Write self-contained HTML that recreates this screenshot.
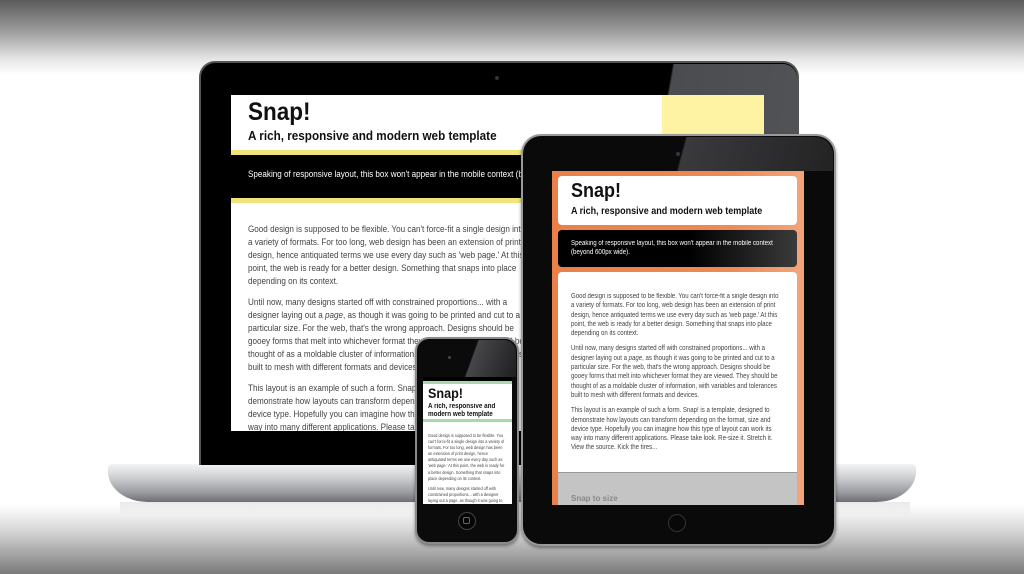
<!DOCTYPE html>
<html><head><meta charset="utf-8"><style>
*{margin:0;padding:0;box-sizing:border-box}
body{width:1024px;height:574px;overflow:hidden;position:relative;font-family:"Liberation Sans",Arial,sans-serif;background:#fff}
.a{position:absolute}
.bg{left:0;top:0;width:1024px;height:574px;background:linear-gradient(#5b5b5b 0px,#9a9a9a 30px,#e8e8e8 60px,#fff 75px,#fff 505px,#d8d8d8 530px,#7a7a7a 574px)}
.t{white-space:nowrap;color:#444;transform-origin:0 0}
.t p{margin:0}
.sx{transform:scaleX(.9);transform-origin:0 0;white-space:nowrap}
</style></head><body>
<div class="a bg"></div>
<!-- laptop base -->
<div class="a" style="left:108px;top:464px;width:808px;height:38px;border-radius:4px 4px 40px 40px/4px 4px 30px 30px;background:linear-gradient(#f4f4f6,#c9cacd 40%,#9a9ba0 75%,#6e6f73)"></div>
<div class="a" style="left:120px;top:502px;width:790px;height:14px;background:linear-gradient(rgba(200,200,205,.4),rgba(255,255,255,0))"></div>
<!-- laptop lid -->
<div class="a" style="left:199px;top:61px;width:600px;height:404px;border-radius:16px 16px 0 0;background:#000;border:2px solid #555;border-bottom:none"></div>
<div class="a" style="left:660px;top:64px;width:137px;height:400px;background:linear-gradient(100deg,rgba(0,0,0,0) 0,rgba(0,0,0,0) 6%,#4b4c50 7%,#545559 100%);border-radius:0 14px 0 0"></div>
<div class="a" style="left:495px;top:76px;width:4px;height:4px;border-radius:2px;background:#333"></div>
<!-- laptop screen -->
<div class="a" style="left:231px;top:95px;width:533px;height:336px;background:#fff;overflow:hidden">
 <div class="a" style="left:431px;top:0;width:102px;height:55px;background:#fdf3a3"></div>
 <div class="a sx" style="left:17px;top:3px;font-size:25px;font-weight:bold;color:#111">Snap!</div>
 <div class="a sx" style="left:17px;top:33px;font-size:13px;font-weight:bold;color:#111">A rich, responsive and modern web template</div>
 <div class="a" style="left:0;top:55px;width:533px;height:5px;background:#f0e47a"></div>
 <div class="a" style="left:0;top:60px;width:533px;height:43px;background:#000"></div>
 <div class="a t" style="left:17px;top:74px;font-size:9px;color:#fff;transform:scaleX(.9)">Speaking of responsive layout, this box won't appear in the mobile context (beyond 600px wide).</div>
 <div class="a" style="left:0;top:103px;width:533px;height:5px;background:#f0e47a"></div>
 <div class="a t" style="left:17px;top:128px;font-size:9px;line-height:13px;transform:scaleX(.9)">
 <p>Good design is supposed to be flexible. You can't force-fit a single design into<br>a variety of formats. For too long, web design has been an extension of print<br>design, hence antiquated terms we use every day such as 'web page.' At this<br>point, the web is ready for a better design. Something that snaps into place<br>depending on its context.</p>
 <p style="margin-top:8px">Until now, many designs started off with constrained proportions... with a<br>designer laying out a <i>page</i>, as though it was going to be printed and cut to a<br>particular size. For the web, that's the wrong approach. Designs should be<br>gooey forms that melt into whichever format they are viewed. They should be<br>thought of as a moldable cluster of information, with variables and tolerances<br>built to mesh with different formats and devices.</p>
 <p style="margin-top:8px">This layout is an example of such a form. Snap! is a template, designed to<br>demonstrate how layouts can transform depending on the format, size and<br>device type. Hopefully you can imagine how this type of layout can work its<br>way into many different applications. Please take look. Re-size it. Stretch it.<br>View the source. Kick the tires...</p>
 </div>
</div>
<!-- tablet -->
<div class="a" style="left:521px;top:134px;width:315px;height:412px;border-radius:20px;background:#0a0a0a;border:2px solid #9a9a9a;box-shadow:0 2px 3px rgba(0,0,0,.4)"></div>
<div class="a" style="left:660px;top:137px;width:173px;height:34px;border-radius:0 18px 0 0;background:linear-gradient(105deg,rgba(0,0,0,0) 14%,rgba(90,90,95,.6) 15%,rgba(60,60,62,.5))"></div>
<div class="a" style="left:676px;top:152px;width:4px;height:4px;border-radius:2px;background:#334"></div>
<div class="a" style="left:668px;top:514px;width:18px;height:18px;border-radius:9px;border:1px solid #333;background:#080808"></div>
<div class="a" style="left:552px;top:171px;width:252px;height:334px;background:linear-gradient(90deg,#e9804a,#ee8a55 70%,#f2a57a);overflow:hidden">
 <div class="a" style="left:6px;top:5px;width:239px;height:49px;background:#fff;border-radius:4px"></div>
 <div class="a sx" style="left:19px;top:9px;font-size:20px;font-weight:bold;color:#111">Snap!</div>
 <div class="a sx" style="left:19px;top:35px;font-size:10px;font-weight:bold;color:#111">A rich, responsive and modern web template</div>
 <div class="a" style="left:6px;top:59px;width:239px;height:37px;background:linear-gradient(90deg,#000 55%,#3a3a3a);border-radius:4px"></div>
 <div class="a t" style="left:19px;top:68px;font-size:7px;line-height:9px;color:#fff;transform:scaleX(.88)">Speaking of responsive layout, this box won't appear in the mobile context<br>(beyond 600px wide).</div>
 <div class="a" style="left:6px;top:101px;width:239px;height:200px;background:#fff;border-radius:4px 4px 0 0"></div>
 <div class="a" style="left:6px;top:301px;width:239px;height:40px;background:#c4c4c4;border-top:1px solid #999"></div>
 <div class="a" style="left:19px;top:323px;font-size:8px;font-weight:bold;color:#888">Snap to size</div>
 <div class="a t" style="left:19px;top:121px;font-size:6.9px;line-height:9.3px;transform:scaleX(.88)">
 <p>Good design is supposed to be flexible. You can't force-fit a single design into<br>a variety of formats. For too long, web design has been an extension of print<br>design, hence antiquated terms we use every day such as 'web page.' At this<br>point, the web is ready for a better design. Something that snaps into place<br>depending on its context.</p>
 <p style="margin-top:6px">Until now, many designs started off with constrained proportions... with a<br>designer laying out a <i>page</i>, as though it was going to be printed and cut to a<br>particular size. For the web, that's the wrong approach. Designs should be<br>gooey forms that melt into whichever format they are viewed. They should be<br>thought of as a moldable cluster of information, with variables and tolerances<br>built to mesh with different formats and devices.</p>
 <p style="margin-top:6px">This layout is an example of such a form. Snap! is a template, designed to<br>demonstrate how layouts can transform depending on the format, size and<br>device type. Hopefully you can imagine how this type of layout can work its<br>way into many different applications. Please take look. Re-size it. Stretch it.<br>View the source. Kick the tires...</p>
 </div>
</div>
<!-- phone -->
<div class="a" style="left:415px;top:337px;width:104px;height:207px;border-radius:14px;background:#0b0b0b;border:2px solid #8a8a8a;box-shadow:0 2px 3px rgba(0,0,0,.4)"></div>
<div class="a" style="left:465px;top:340px;width:51px;height:37px;border-radius:0 12px 0 0;background:linear-gradient(110deg,rgba(0,0,0,0) 20%,rgba(110,110,115,.6) 22%,rgba(60,60,62,.4))"></div>
<div class="a" style="left:448px;top:356px;width:3px;height:3px;border-radius:2px;background:#445"></div>
<div class="a" style="left:458px;top:512px;width:18px;height:18px;border-radius:9px;border:1px solid #444;background:#060606"></div>
<div class="a" style="left:463px;top:517px;width:7px;height:7px;border-radius:2px;border:1px solid #666"></div>
<div class="a" style="left:423px;top:377px;width:89px;height:127px;background:#fff;overflow:hidden">
 <div class="a" style="left:0;top:0;width:89px;height:4px;background:#000"></div>
 <div class="a" style="left:0;top:4px;width:89px;height:3px;background:#a9d8b0"></div>
 <div class="a sx" style="left:5px;top:8px;font-size:14px;font-weight:bold;color:#111">Snap!</div>
 <div class="a sx" style="left:5px;top:26px;font-size:7px;line-height:8px;font-weight:bold;color:#111">A rich, responsive and<br>modern web template</div>
 <div class="a" style="left:0;top:42px;width:89px;height:3px;background:#a9d8b0"></div>
 <div class="a t" style="left:5px;top:56px;font-size:4.3px;line-height:6.1px;transform:scaleX(.9)">
 <p>Good design is supposed to be flexible. You<br>can't force-fit a single design into a variety of<br>formats. For too long, web design has been<br>an extension of print design, hence<br>antiquated terms we use every day such as<br>'web page.' At this point, the web is ready for<br>a better design. Something that snaps into<br>place depending on its context.</p>
 <p style="margin-top:4px">Until now, many designs started off with<br>constrained proportions... with a designer<br>laying out a page, as though it was going to</p>
 </div>
</div>
</body></html>
